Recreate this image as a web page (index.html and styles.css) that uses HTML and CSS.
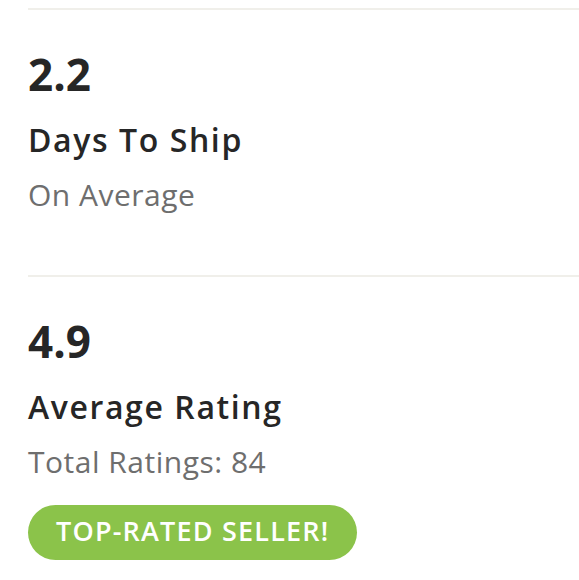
FILE: index.html
```html
<!DOCTYPE html>
<html>
<head>
<meta charset="utf-8">
<link rel="stylesheet" href="styles.css">
</head>
<body>
<div class="page">
  <section class="stat">
    <div class="value">2.2</div>
    <div class="label">Days To Ship</div>
    <div class="sub">On Average</div>
  </section>
  <section class="stat">
    <div class="value">4.9</div>
    <div class="label">Average Rating</div>
    <div class="sub">Total Ratings: 84</div>
    <div class="badge">TOP-RATED SELLER!</div>
  </section>
</div>
</body>
</html>
```
FILE: styles.css
```css
html, body {
  margin: 0;
  padding: 0;
  background: #fff;
}
.page {
  padding: 8px 0 0 28px;
  font-family: "Open Sans", "Noto Sans", sans-serif;
  color: #262626;
}
.stat {
  border-top: 2px solid #f0efea;
  padding-top: 40px;
  padding-bottom: 62px;
}
.stat:last-child {
  padding-bottom: 0;
}
.value {
  font-size: 44px;
  font-weight: 700;
  line-height: 48px;
}
.label {
  font-size: 32px;
  font-weight: 600;
  line-height: 36px;
  letter-spacing: 1.6px;
  margin-top: 24px;
}
.sub {
  font-size: 30px;
  color: #6e6e6e;
  line-height: 36px;
  letter-spacing: 0.5px;
  margin-top: 19px;
}
.badge {
  display: inline-block;
  margin-top: 25px;
  background: #8bc34a;
  color: #fff;
  font-size: 27px;
  font-weight: 600;
  line-height: 51px;
  letter-spacing: 1.2px;
  padding: 0 28px 4px;
  border-radius: 28px;
}
```
